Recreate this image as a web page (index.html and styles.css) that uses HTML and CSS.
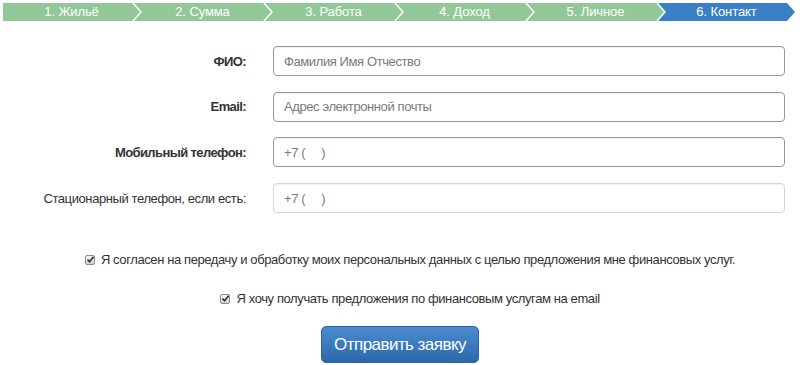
FILE: index.html
```html
<!DOCTYPE html>
<html lang="ru">
<head>
    <meta charset="UTF-8">
    <meta name="viewport" content="width=device-width, initial-scale=1.0">
    <title>Заявка — Контакт</title>
    <link rel="stylesheet" href="styles.css">
</head>
<body>
    <!-- шаги анкеты -->
    <div class="steps">
        <div class="step step-first">1. Жильё</div>
        <div class="step">2. Сумма</div>
        <div class="step">3. Работа</div>
        <div class="step">4. Доход</div>
        <div class="step">5. Личное</div>
        <div class="step step-active">6. Контакт</div>
    </div>

    <form class="form">
        <label class="label label-req" for="fio">ФИО:</label>
        <input class="field field-req" id="fio" type="text" placeholder="Фамилия Имя Отчество">

        <label class="label label-req" for="email">Email:</label>
        <input class="field field-req" id="email" type="text" placeholder="Адрес электронной почты">

        <label class="label label-req" for="mobile">Мобильный телефон:</label>
        <input class="field field-req" id="mobile" type="text" placeholder="+7 (&#160;&#160;&#160;&#160;&#160;)">

        <label class="label" for="phone">Стационарный телефон, если есть:</label>
        <input class="field" id="phone" type="text" placeholder="+7 (&#160;&#160;&#160;&#160;&#160;)">
    </form>

    <div class="agree">
        <div class="agree-row">
            <span class="check"><svg viewBox="0 0 9 9" width="9" height="9"><path d="M1.5 4.6 L3.6 6.8 L7.6 1.8" fill="none" stroke="#333" stroke-width="1.6"/></svg></span>
            Я согласен на передачу и обработку моих персональных данных с целью предложения мне финансовых услуг.
        </div>
        <div class="agree-row agree-second">
            <span class="check"><svg viewBox="0 0 9 9" width="9" height="9"><path d="M1.5 4.6 L3.6 6.8 L7.6 1.8" fill="none" stroke="#333" stroke-width="1.6"/></svg></span>
            Я хочу получать предложения по финансовым услугам на email
        </div>
    </div>

    <div class="submit-row">
        <button class="submit" type="button">Отправить заявку</button>
    </div>
</body>
</html>
```

FILE: styles.css
```css
/* общие стили */
body {
    margin: 0;
    font-family: "Liberation Sans", Arial, sans-serif;
    font-size: 13px;
    letter-spacing: -0.4px;
    color: #333;
    background: #fff;
}

/* полоса шагов */
.steps {
    display: flex;
    padding: 3px 0 0 3px;
    height: 18px;
}
.step {
    width: 137px;
    height: 18px;
    margin-left: -6px;
    background-color: #92c898;
    color: #fff;
    line-height: 18px;
    letter-spacing: -0.1px;
    text-align: center;
    clip-path: polygon(0 0, 129px 0, 137px 50%, 129px 100%, 0 100%, 8px 50%);
}
.step-first {
    margin-left: 0;
    clip-path: polygon(0 0, 129px 0, 137px 50%, 129px 100%, 0 100%);
}
.step-active {
    background-color: #3b80c6;
}

/* форма */
.form {
    display: grid;
    grid-template-columns: 246px 512px;
    column-gap: 27px;
    row-gap: 15.7px;
    align-items: center;
    margin-top: 25px;
}
.label {
    text-align: right;
    color: #333;
}
.label-req {
    font-weight: bold;
    letter-spacing: -0.6px;
}
.field {
    box-sizing: border-box;
    height: 30px;
    padding: 0 10px;
    border: 1px solid #d6d6d6;
    border-radius: 4px;
    font-family: inherit;
    font-size: 13px;
    letter-spacing: -0.4px;
    color: #555;
    box-shadow: inset 0 1px 1px rgba(0,0,0,0.06);
}
.field-req {
    border-color: #979797;
}
.field::placeholder {
    color: #7a7a7a;
}

/* согласия */
.agree {
    padding-left: 20px;
    margin-top: 39px;
    text-align: center;
}
.agree-row {
    line-height: 16px;
}
.agree-second {
    margin-top: 23px;
}
.check {
    display: inline-block;
    box-sizing: border-box;
    width: 10px;
    height: 10px;
    margin-right: 3px;
    border: 1px solid #8c8c8c;
    border-radius: 2px;
    background: linear-gradient(#f4f4f4, #d4d4d4);
    vertical-align: -1px;
    position: relative;
}
.check svg {
    position: absolute;
    left: 0;
    top: -1px;
}

/* кнопка */
.submit-row {
    text-align: center;
    margin-top: 19px;
}
.submit {
    width: 158px;
    height: 37px;
    border: 1px solid #2b64a0;
    border-radius: 5px;
    background: linear-gradient(#4a8bd0, #2c69a9);
    color: #fff;
    font-family: inherit;
    font-size: 17px;
    letter-spacing: -0.55px;
    cursor: pointer;
}
```
